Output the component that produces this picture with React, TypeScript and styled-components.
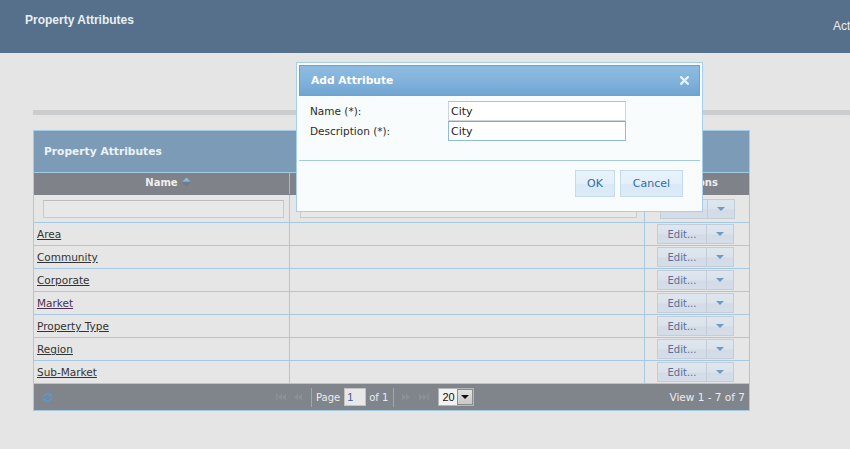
import React from 'react';
import styled, { createGlobalStyle } from 'styled-components';

const Global = createGlobalStyle`
  html, body { margin: 0; padding: 0; background: #e5e5e5; }
  body { font-family: 'DejaVu Sans', sans-serif; }
  * { box-sizing: border-box; }
`;

const Page = styled.div`
  position: relative;
  width: 850px;
  height: 449px;
  background: #e5e5e5;
  overflow: hidden;
`;

const TopBar = styled.header`
  height: 53px;
  background: #566f8a;
  display: flex;
  align-items: flex-start;
  font-family: 'Liberation Sans', Arial, sans-serif;
  font-size: 12px;
  line-height: 16px;
  color: #e9eef4;
  white-space: nowrap;
`;

const TopTitle = styled.h1`
  margin: 0;
  padding: 12px 0 0 25px;
  font-size: 12px;
  line-height: 16px;
  font-weight: bold;
`;

const TopNav = styled.nav`
  margin-left: auto;
  width: 17px;
  padding-top: 18px;
`;

const Content = styled.main`
  padding: 57px 0 0 33px;
`;

const Rule = styled.div`
  height: 5px;
  background: #cbcccd;
`;

const Grid = styled.section`
  margin-top: 15px;
  width: 717px;
  border: 1px solid #a6c9e2;
  font-family: 'DejaVu Sans', sans-serif;
`;

const Caption = styled.div`
  height: 42px;
  border-bottom: 1px solid #a6c9e2;
  background: #7b9bb7;
  color: #eef2f6;
  font-size: 10.7px;
  font-weight: bold;
  display: flex;
  align-items: center;
  padding: 0 0 1px 10px;
`;

const Row = styled.div<{ $h: number; $bg: string; $line: string }>`
  display: grid;
  grid-template-columns: 256px 355px 1fr;
  height: ${(p) => p.$h}px;
  background: ${(p) => p.$bg};
  border-bottom: 1px solid ${(p) => p.$line};
`;

const HeadCell = styled.div<{ $last?: boolean }>`
  border-right: ${(p) => (p.$last ? 'none' : '1px solid #b3b7bd')};
  display: flex;
  align-items: center;
  justify-content: center;
  padding-bottom: 2px;
  color: #eeeeee;
  font-size: 10px;
  font-weight: bold;
`;

const HeadLabel = styled.span`
  position: relative;
`;

const SortIcon = styled.svg`
  position: absolute;
  left: calc(100% + 4px);
  top: 0px;
`;

const Cell = styled.div<{ $last?: boolean; $pl?: number }>`
  border-right: ${(p) => (p.$last ? 'none' : '1px solid #a6c9e2')};
  display: flex;
  align-items: center;
  padding-left: ${(p) => p.$pl ?? 3}px;
  overflow: hidden;
`;

const FilterInput = styled.input<{ $w: number }>`
  width: ${(p) => p.$w}px;
  height: 18px;
  border: 1px solid #c9c9c9;
  border-top-color: #bdbdbd;
  background: #e8e8e8;
  padding: 0;
  margin: 0;
  outline: none;
`;

const NameLink = styled.a<{ $visited?: boolean }>`
  font-size: 10.5px;
  color: ${(p) => (p.$visited ? '#4a3050' : '#333333')};
  text-decoration: underline;
  cursor: pointer;
`;

const Split = styled.div<{ $main: number }>`
  display: flex;
  height: 20px;
  width: ${(p) => p.$main + 28}px;
  border: 1px solid #c3cdd8;
  background: linear-gradient(#dfe6ee 0%, #dae2eb 50%, #d3dce6 55%, #d5dee8 100%);
  font-size: 10px;
  color: #5b6f9c;
`;

const SplitMain = styled.div<{ $main: number }>`
  width: ${(p) => p.$main}px;
  border-right: 1px solid #c3cdd8;
  display: flex;
  align-items: center;
  justify-content: center;
`;

const SplitArrow = styled.div`
  flex: 1;
  display: flex;
  align-items: center;
  justify-content: center;
`;

const Pager = styled.div`
  height: 26px;
  background: #80848b;
  display: flex;
  align-items: center;
  font-size: 10px;
  color: #ececec;
  white-space: nowrap;
`;

const PagerLeft = styled.div`
  width: 238px;
  padding-left: 8px;
  display: flex;
  align-items: center;
`;

const PagerIcon = styled.div`
  width: 18px;
  height: 18px;
  display: flex;
  align-items: center;
  justify-content: center;
`;

const PagerSep = styled.div<{ $ml: number }>`
  width: 1px;
  height: 19px;
  background: #a3a6ab;
  margin: 0 3px 0 ${(p) => p.$ml}px;
`;

const PagerText = styled.span<{ $ml?: number }>`
  margin-left: ${(p) => p.$ml ?? 0}px;
`;

const PageInput = styled.input`
  width: 22px;
  height: 18px;
  margin: 0 0 0 4px;
  padding: 0 0 0 2px;
  border: 1px solid #c4c4c4;
  background: #e8e8e8;
  color: #3a6190;
  font-family: 'Liberation Sans', Arial, sans-serif;
  font-size: 11px;
  outline: none;
`;

const SelectBox = styled.div`
  margin-left: 5px;
  width: 36px;
  height: 18px;
  display: flex;
  border: 1px solid #b4b6b9;
  background: #f2f2f2;
  font-family: 'Liberation Sans', Arial, sans-serif;
  font-size: 11px;
  color: #111;
`;

const SelectValue = styled.div`
  flex: 1;
  display: flex;
  align-items: center;
  padding-left: 3px;
`;

const SelectBtn = styled.div`
  width: 16px;
  border: 1px solid #8d8d8d;
  background: linear-gradient(#e2e2e2, #c9c9c9);
  display: flex;
  align-items: center;
  justify-content: center;
`;

const PagerRight = styled.div`
  margin-left: auto;
  padding-right: 4px;
  font-size: 10.5px;
  color: #ececec;
  padding-bottom: 1px;
`;

const Dialog = styled.div`
  position: absolute;
  left: 296px;
  top: 62px;
  width: 407px;
  height: 150px;
  border: 1px solid #a6cfee;
  background: #f9fcfd;
  padding: 2px;
  display: flex;
  flex-direction: column;
  font-family: 'DejaVu Sans', sans-serif;
`;

const DialogTitle = styled.div`
  height: 31px;
  border: 1px solid #6aa2d0;
  background: linear-gradient(#8ebce1 0%, #84b4dc 45%, #6fa5d1 100%);
  display: flex;
  align-items: center;
  justify-content: space-between;
  padding: 0 10px 1px 11px;
  color: #ffffff;
  font-weight: bold;
  font-size: 10.7px;
`;

const Form = styled.div`
  height: 64px;
  padding: 5px 0 0 11px;
  display: grid;
  grid-template-columns: 138px 178px;
  grid-auto-rows: 20px;
  align-content: start;
`;

const Label = styled.label`
  font-size: 10.5px;
  color: #2b2b2b;
  display: flex;
  align-items: center;
  padding-bottom: 1px;
`;

const TextInput = styled.input<{ $focus?: boolean }>`
  width: 178px;
  height: 20px;
  margin: 0;
  padding: 0 0 0 2px;
  border: 1px solid ${(p) => (p.$focus ? '#8fbbdf' : '#cfd4da')};
  border-top-color: ${(p) => (p.$focus ? '#7aaad2' : '#b7bec6')};
  background: #ffffff;
  font-family: 'DejaVu Sans', sans-serif;
  font-size: 11px;
  color: #222;
  outline: none;
`;

const ButtonPane = styled.div`
  border-top: 1px solid #a6c9e2;
  display: flex;
  justify-content: flex-end;
  gap: 5px;
  padding: 9px 17px 0 0;
`;

const DlgButton = styled.button<{ $w: number }>`
  width: ${(p) => p.$w}px;
  height: 27px;
  margin: 0;
  padding: 0;
  border: 1px solid #c5dbec;
  background: linear-gradient(#e8f2fb 0%, #e4eff9 50%, #dae9f7 52%, #dcebf8 100%);
  color: #2e6e9e;
  font-family: 'DejaVu Sans', sans-serif;
  font-size: 11px;
`;

const Down = ({ c = '#6e9bc5' }: { c?: string }) => (
  <svg width="8" height="4" viewBox="0 0 8 4">
    <polygon points="0,0 8,0 4,4" fill={c} />
  </svg>
);

const Seek = ({ dir, bar }: { dir: 'l' | 'r'; bar?: boolean }) => {
  const c = 'rgba(150,154,160,0.55)';
  return (
    <svg width="12" height="8" viewBox="0 0 12 8">
      {dir === 'l' ? (
        <>
          {bar && <rect x="1" y="0.5" width="1.5" height="7" fill={c} />}
          <polygon points={bar ? '3,4 7,0.5 7,7.5' : '1,4 5,0.5 5,7.5'} fill={c} />
          <polygon points={bar ? '7,4 11,0.5 11,7.5' : '5,4 9,0.5 9,7.5'} fill={c} />
        </>
      ) : (
        <>
          <polygon points={bar ? '1,0.5 5,4 1,7.5' : '2,0.5 6,4 2,7.5'} fill={c} />
          <polygon points={bar ? '5,0.5 9,4 5,7.5' : '6,0.5 10,4 6,7.5'} fill={c} />
          {bar && <rect x="9.5" y="0.5" width="1.5" height="7" fill={c} />}
        </>
      )}
    </svg>
  );
};

const rows = ['Area', 'Community', 'Corporate', 'Market', 'Property Type', 'Region', 'Sub-Market'];

export default function App() {
  return (
    <Page>
      <Global />
      <TopBar>
        <TopTitle>Property Attributes</TopTitle>
        <TopNav>Actions</TopNav>
      </TopBar>
      <Content>
        <Rule />
        <Grid>
          <Caption>Property Attributes</Caption>
          <Row $h={22} $bg="#7f8289" $line="#7f8289">
            <HeadCell>
              <HeadLabel>
                Name
                <SortIcon width="9" height="10" viewBox="0 0 9 10">
                  <polygon points="0.5,4.5 4.5,0.5 8.5,4.5" fill="#8fb9da" />
                  <polygon points="0.5,5.5 8.5,5.5 4.5,9.5" fill="#6c7c8b" />
                </SortIcon>
              </HeadLabel>
            </HeadCell>
            <HeadCell>Description</HeadCell>
            <HeadCell $last>Actions</HeadCell>
          </Row>
          <Row $h={28} $bg="#e6e6e6" $line="#a6c9e2">
            <Cell $pl={9}>
              <FilterInput $w={241} />
            </Cell>
            <Cell $pl={10}>
              <FilterInput $w={337} />
            </Cell>
            <Cell $last $pl={15}>
              <Split $main={47}>
                <SplitMain $main={47}>Filter</SplitMain>
                <SplitArrow>
                  <Down />
                </SplitArrow>
              </Split>
            </Cell>
          </Row>
          {rows.map((r) => (
            <Row key={r} $h={23} $bg="#e6e6e6" $line="#a6c9e2">
              <Cell>
                <NameLink $visited={r === 'Market'}>{r}</NameLink>
              </Cell>
              <Cell />
              <Cell $last $pl={12}>
                <Split $main={49}>
                  <SplitMain $main={49}>Edit...</SplitMain>
                  <SplitArrow>
                    <Down />
                  </SplitArrow>
                </Split>
              </Cell>
            </Row>
          ))}
          <Pager>
            <PagerLeft>
              <svg width="11" height="11" viewBox="0 0 11 11" fill="none">
                <path d="M1.8 5 A3.7 3.7 0 0 1 8.1 2.7" stroke="#4ba0df" strokeWidth="1.3" />
                <polygon points="9.7,1 9.7,4.6 6.1,4.6" fill="#4ba0df" />
                <path d="M9.2 6 A3.7 3.7 0 0 1 2.9 8.3" stroke="#4ba0df" strokeWidth="1.3" />
                <polygon points="1.3,10 1.3,6.4 4.9,6.4" fill="#4ba0df" />
              </svg>
            </PagerLeft>
            <PagerIcon>
              <Seek dir="l" bar />
            </PagerIcon>
            <PagerIcon>
              <Seek dir="l" />
            </PagerIcon>
            <PagerSep $ml={3} />
            <PagerText $ml={1}>Page</PagerText>
            <PageInput readOnly value="1" />
            <PagerText $ml={3}>of 1</PagerText>
            <PagerSep $ml={5} />
            <PagerIcon>
              <Seek dir="r" />
            </PagerIcon>
            <PagerIcon>
              <Seek dir="r" bar />
            </PagerIcon>
            <SelectBox>
              <SelectValue>20</SelectValue>
              <SelectBtn>
                <Down c="#111" />
              </SelectBtn>
            </SelectBox>
            <PagerRight>View 1 - 7 of 7</PagerRight>
          </Pager>
        </Grid>
      </Content>
      <Dialog>
        <DialogTitle>
          <span>Add Attribute</span>
          <svg width="9" height="9" viewBox="0 0 9 9">
            <path d="M1.2 1.2 L7.8 7.8 M7.8 1.2 L1.2 7.8" stroke="#e9f2fa" strokeWidth="2.3" strokeLinecap="square" />
          </svg>
        </DialogTitle>
        <Form>
          <Label>Name (*):</Label>
          <TextInput readOnly value="City" />
          <Label>Description (*):</Label>
          <TextInput $focus readOnly value="City" />
        </Form>
        <ButtonPane>
          <DlgButton $w={40}>OK</DlgButton>
          <DlgButton $w={63}>Cancel</DlgButton>
        </ButtonPane>
      </Dialog>
    </Page>
  );
}
